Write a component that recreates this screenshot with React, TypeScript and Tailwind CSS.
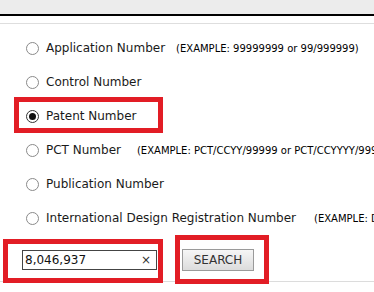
import React from "react";

type Row = { label: string; example?: string; gap?: string; checked?: boolean };

const rows: Row[] = [
  { label: "Application Number", example: "(EXAMPLE: 99999999 or 99/999999)", gap: "ml-[11px]" },
  { label: "Control Number" },
  { label: "Patent Number", checked: true },
  { label: "PCT Number", example: "(EXAMPLE: PCT/CCYY/99999 or PCT/CCYYYY/999999)", gap: "ml-[16px]" },
  { label: "Publication Number" },
  {
    label: "International Design Registration Number",
    example: "(EXAMPLE: DM/999999)",
    gap: "ml-[18px]",
  },
];

function Radio({ checked }: { checked?: boolean }) {
  return (
    <span
      className={`flex w-[13px] h-[13px] shrink-0 items-center justify-center rounded-full border bg-white ${
        checked ? "border-[#333]" : "border-[#8a8a8a]"
      }`}
    >
      {checked && <span className="block w-[7px] h-[7px] rounded-full bg-[#111]" />}
    </span>
  );
}

export default function App() {
  return (
    <div
      className="relative w-[374px] h-[292px] overflow-hidden bg-white text-[#1a1a1a]"
      style={{ fontFamily: '"DejaVu Sans", Verdana, sans-serif' }}
    >
      {/* header strip */}
      <div className="h-[14px] bg-[#ececec]" />
      <div className="h-[2px] bg-black" />
      <div className="h-[7px]" />
      <div className="h-[1px] bg-[#dedede]" />

      {/* search type options */}
      <div className="pt-[7px]">
        {rows.map((r) => (
          <div key={r.label} className="flex h-[34px] items-center whitespace-nowrap pl-[26px]">
            <Radio checked={r.checked} />
            <span className="ml-[7px] text-[12px]">{r.label}</span>
            {r.example && (
              <span className={`${r.gap} text-[10px] text-black`}>{r.example}</span>
            )}
          </div>
        ))}
      </div>

      {/* input + button */}
      <div className="flex h-[46px] items-center pl-[22px] pt-[4px]">
        <div className="flex w-[135px] h-[20px] items-center justify-between border border-[#444] bg-white pl-[2px] pr-[5px]">
          <span className="text-[12px] text-[#111]">8,046,937</span>
          <span className="text-[12px] leading-none text-[#333]">×</span>
        </div>
        <button
          type="button"
          className="ml-[25px] w-[72px] h-[22px] border border-[#9a9a9a] bg-gradient-to-b from-[#f6f6f6] to-[#dcdcdc] text-[12px] text-[#333]"
        >
          SEARCH
        </button>
      </div>
      <div className="h-[1px] bg-[#dcdcdc]" />

      {/* red annotation boxes */}
      <div className="absolute left-[14px] top-[97px] w-[149px] h-[36px] border-[5px] border-[#e21d25]" />
      <div className="absolute left-[3px] top-[239px] w-[160px] h-[44px] border-[5px] border-[#e21d25]" />
      <div className="absolute left-[175px] top-[235px] w-[94px] h-[49px] border-[5px] border-[#e21d25]" />
    </div>
  );
}
